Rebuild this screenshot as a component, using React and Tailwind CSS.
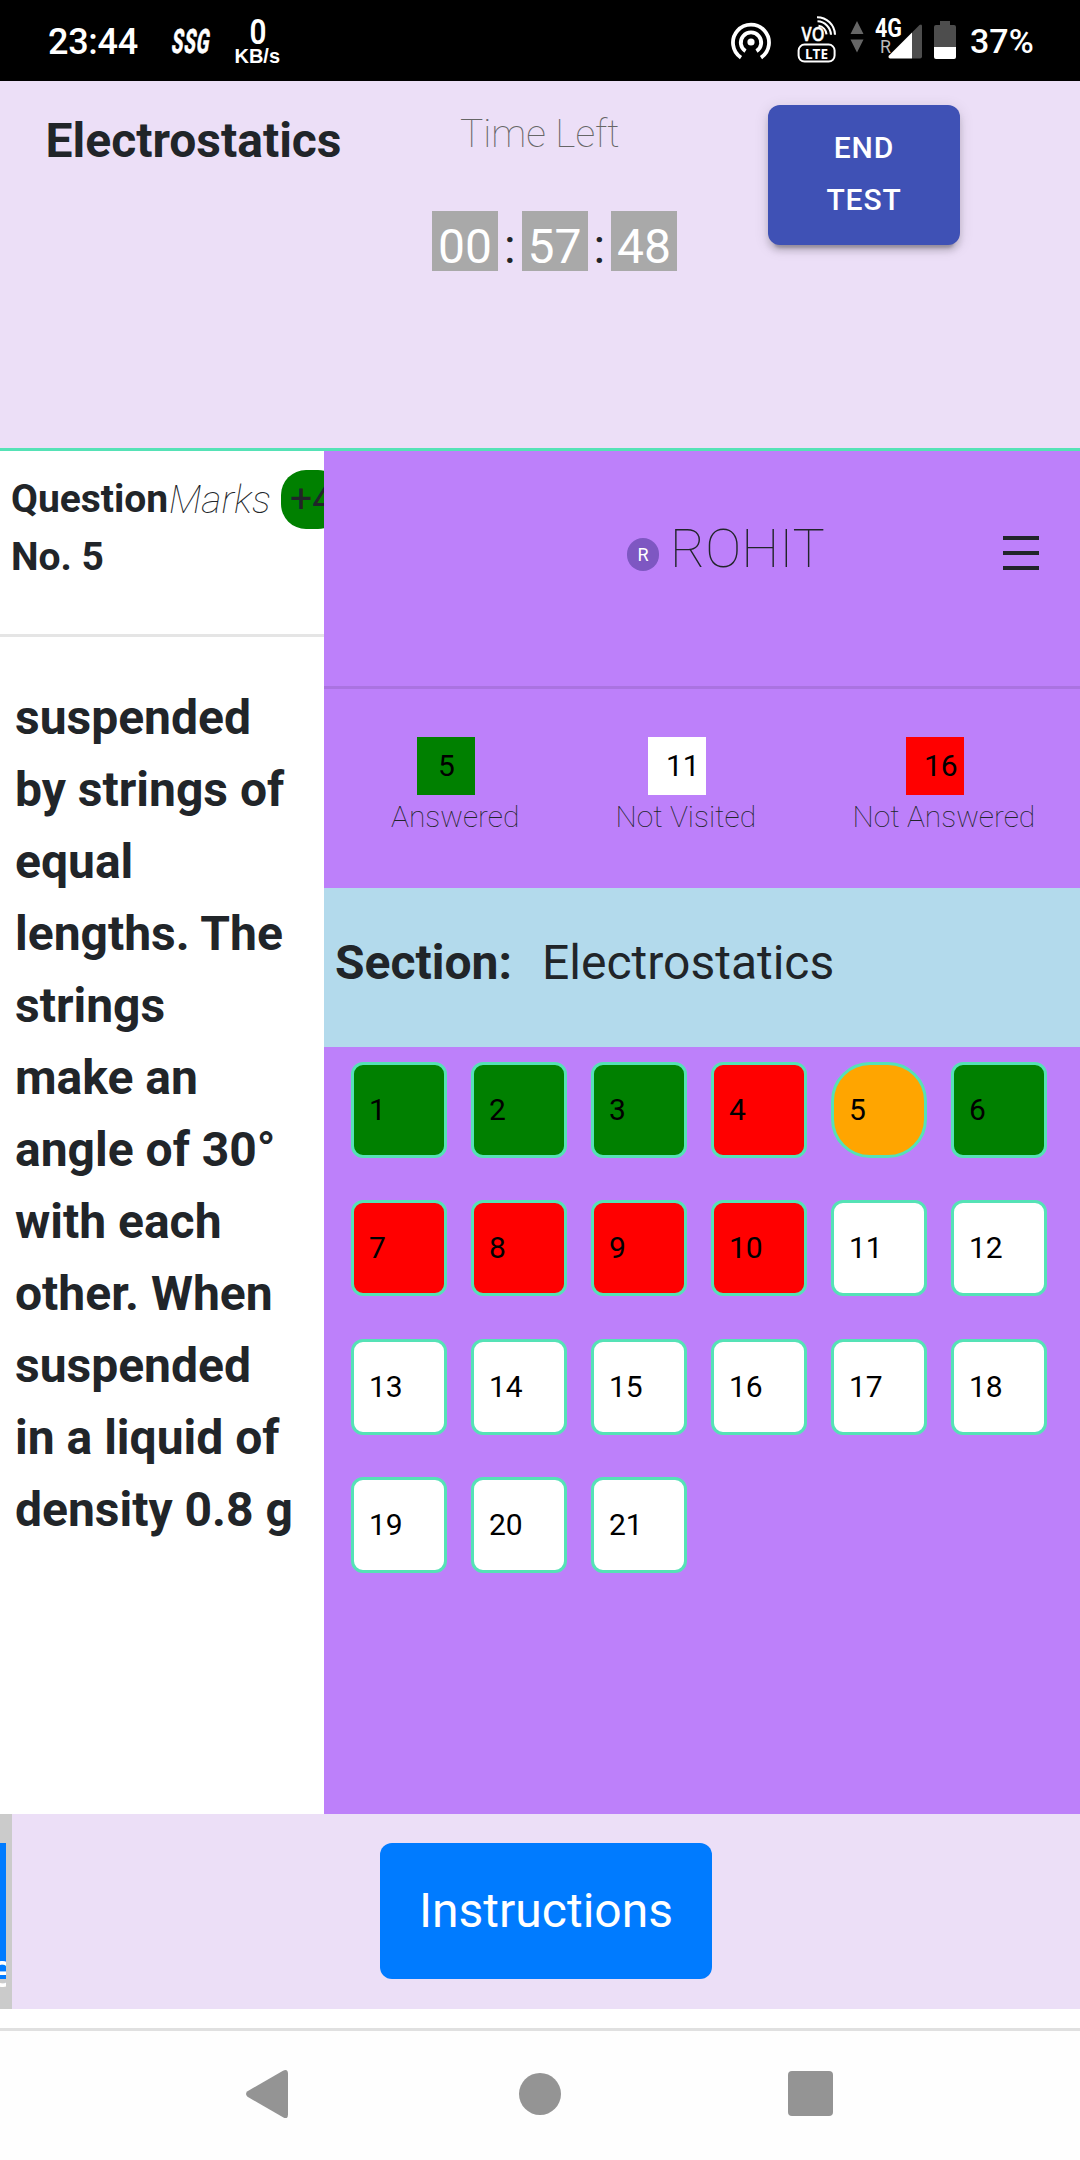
import React from "react";

const HotspotIcon = () => (
  <svg width="42" height="42" viewBox="0 0 42 42" fill="none" stroke="#fff" strokeWidth="3.8" className="shrink-0">
    <path d="M11 36.600A18 18 0 1 1 31 36.600" />
    <path d="M15.500 30.200A10.200 10.200 0 1 1 26.500 30.200" />
    <circle cx="21" cy="21" r="3.600" fill="#fff" stroke="none" />
  </svg>
);

const VolteIcon = () => (
  <svg width="40" height="50" viewBox="0 0 40 50" fill="none" stroke="#fff" className="shrink-0">
    <text x="4.500" y="28" textLength="23" lengthAdjust="spacingAndGlyphs" fill="#fff" stroke="#fff" strokeWidth="0.4" fontFamily="Open Sans" fontWeight="600" fontSize="19">VO</text>
    <path d="M21.500 12.800a9.500 9.500 0 0 1 8 8.500M20.500 8.300a14 14 0 0 1 13.500 13.500M20 4.200a18 18 0 0 1 18 17.500" strokeWidth="2.1" />
    <rect x="1.600" y="31.600" width="36" height="17" rx="6" strokeWidth="2" />
    <text x="8" y="45.500" textLength="23" lengthAdjust="spacingAndGlyphs" fill="#fff" stroke="none" fontFamily="Open Sans" fontWeight="700" fontSize="15">LTE</text>
  </svg>
);

const DataArrows = () => (
  <svg width="14" height="32" viewBox="0 0 14 32" fill="#666" className="shrink-0">
    <path d="M7 0 13.500 13H.500ZM7 31.500 13.500 18.500H.500Z" />
  </svg>
);

const SignalIcon = () => (
  <svg width="48" height="42" viewBox="0 0 48 42" className="shrink-0">
    <path d="M37 14.500 44.500 7Q47 5.500 47 8v30.500q0 2-2 2h-8Z" fill="#4d4d4d" />
    <path d="M37 14.500V40.500H15Q12.500 39.500 14 37.500Z" fill="#fff" />
    <text x="0" y="19" textLength="27" lengthAdjust="spacingAndGlyphs" fill="#fff" fontFamily="Roboto" fontWeight="700" fontSize="25">4G</text>
    <text x="5" y="35" textLength="11" lengthAdjust="spacingAndGlyphs" fill="#bbb" fontFamily="Roboto" fontSize="19">R</text>
  </svg>
);

const BatteryIcon = () => (
  <svg width="22" height="38" viewBox="0 0 22 38" className="shrink-0">
    <path d="M6 0h10v4h4q2 0 2 2v20H0V6q0-2 2-2h4Z" fill="#4d4d4d" />
    <path d="M0 26h22v10q0 2-2 2H2q-2 0-2-2Z" fill="#fff" />
  </svg>
);

function StatusBar() {
  return (
    <div className="flex h-[81px] items-start bg-black text-white">
      <span className="ml-12 mt-[22px] w-[123px] text-[36px] font-medium leading-[41px] tracking-[-0.3px]">23:44</span>
      <svg width="45" height="32" viewBox="0 0 45 32" className="mt-[25px] shrink-0">
        <text transform="translate(-0.500 28) skewX(-9) scale(0.56 1)" letterSpacing="1.400" fill="#fff" stroke="#fff" strokeWidth="0.500" fontFamily="Roboto" fontWeight="800" fontSize="33.500">SSG</text>
      </svg>
      <svg width="48" height="50" viewBox="0 0 48 50" fill="#fff" className="ml-[18px] mt-[17px] shrink-0">
        <text x="15.500" y="27" textLength="17" lengthAdjust="spacingAndGlyphs" fontFamily="Roboto" fontWeight="600" fontSize="35">0</text>
        <text x="0.500" y="45.500" textLength="45.500" lengthAdjust="spacingAndGlyphs" fontFamily="Liberation Sans" fontWeight="700" fontSize="19.500">KB/s</text>
      </svg>
      <div className="ml-auto flex pr-[47px]">
        <div className="mr-[25px] mt-[21px]"><HotspotIcon /></div>
        <div className="mr-[13px] mt-[13px]"><VolteIcon /></div>
        <div className="mr-[11px] mt-[21px]"><DataArrows /></div>
        <div className="mr-[11px] mt-[18px]"><SignalIcon /></div>
        <div className="mr-[14px] mt-[21px]"><BatteryIcon /></div>
        <span className="mt-[21px] w-[63px] text-[34px] font-medium leading-[41px]">37%</span>
      </div>
    </div>
  );
}

function Timer() {
  const box = "h-[60px] w-[66px] bg-[#a9a9a9] pt-[11px] text-center leading-[49px] text-white";
  const colon = "w-[23.5px] pt-[11px] text-center leading-[49px]";
  return (
    <div className="mt-12 flex text-[48px]">
      <span className={box}>00</span>
      <span className={colon}>:</span>
      <span className={box}>57</span>
      <span className={colon}>:</span>
      <span className={box}>48</span>
    </div>
  );
}

function Header() {
  return (
    <header className="flex h-[370px] items-start border-b-[3px] border-[#55e2b6] bg-[#ecdff7] pt-6">
      <h1 className="w-[387px] pl-[45.5px] text-[48px] font-bold leading-[72px]">Electrostatics</h1>
      <div className="w-[381px] pl-[45px]">
        <p className="pl-7 text-[39px] font-thin leading-[58px] text-[#666]">Time Left</p>
        <Timer />
      </div>
      <button className="h-[140px] w-[192px] rounded-[12px] bg-[#3f51b5] px-12 pb-0.5 text-[30px] font-medium leading-[52px] tracking-[0.857px] text-white shadow-[0_9px_3px_-6px_rgba(0,0,0,0.2),0_6px_6px_0_rgba(0,0,0,0.14),0_3px_15px_0_rgba(0,0,0,0.12)]">
        END TEST
      </button>
    </header>
  );
}

const LINES = [
  "suspended", "by strings of", "equal", "lengths. The", "strings", "make an",
  "angle of 30°", "with each", "other. When", "suspended", "in a liquid of", "density 0.8 g",
];

function QuestionPanel() {
  return (
    <section className="w-[324px] shrink-0 overflow-hidden bg-white">
      <div className="flex h-[186px] items-start border-b-[3px] border-[#e5e5e5] pl-[11px] pt-[19px] text-[39px] leading-[58px]">
        <h2 className="w-[158px] shrink-0 font-bold">Question No. 5</h2>
        <i className="mt-px w-[112px] shrink-0 font-thin">Marks</i>
        <span className="shrink-0 rounded-[25px] bg-[#008000] px-[9px] leading-[59px]">+4</span>
      </div>
      <div className="pl-[15px] pt-[45px] text-[48px] font-bold leading-[72px]">
        {LINES.map((line, i) => (
          <div key={i} className="whitespace-nowrap">{line}</div>
        ))}
      </div>
    </section>
  );
}

const STATS = [
  { value: "5", label: "Answered", box: "bg-[#008000] pl-[21px] ml-[93px]", text: "ml-[67px]", width: "w-[267px]" },
  { value: "11", label: "Not Visited", box: "bg-white pl-[18px] ml-[57px]", text: "ml-[24.5px]", width: "w-[238px]" },
  { value: "16", label: "Not Answered", box: "bg-[#ff0000] pl-[18px] ml-[77px]", text: "ml-[23.5px]", width: "w-[251px]" },
];

const QUESTIONS = "gggrogrrrrwwwwwwwwwww".split("");
const CELL = {
  g: "bg-[#008000] rounded-[12px]",
  r: "bg-[#ff0000] rounded-[12px]",
  o: "bg-[#ffa500] rounded-[39px]",
  w: "bg-white rounded-[12px]",
};

function Sidebar() {
  return (
    <aside className="flex-1 bg-[#bd80fa]">
      <div className="flex h-[238px] items-start border-b-[3px] border-[#aa73e1]">
        <span className="ml-[303px] mt-[87px] flex h-[33px] w-8 items-center justify-center rounded-full bg-[#7e57c2] text-[18px] text-white">R</span>
        <span className="ml-[11px] mt-[57px] text-[54px] font-thin leading-[81px]">ROHIT</span>
        <span className="ml-auto mr-[41px] mt-[85px] flex flex-col gap-[11px]">
          <span className="h-1 w-9 bg-[#212529]" />
          <span className="h-1 w-9 bg-[#212529]" />
          <span className="h-1 w-9 bg-[#212529]" />
        </span>
      </div>
      <div className="flex h-[199px] pt-12">
        {STATS.map((s) => (
          <div key={s.label} className={s.width}>
            <div className={"h-[58px] w-[58px] text-[30px] leading-[58px] text-black " + s.box}>{s.value}</div>
            <div className={"whitespace-nowrap text-[30px] font-thin leading-[43px] " + s.text}>{s.label}</div>
          </div>
        ))}
      </div>
      <div className="flex h-[159px] bg-[#b3daec] pl-[11px] pt-[39px] text-[48px] leading-[72px]">
        <b className="w-[207px] font-bold">Section:</b>
        <span>Electrostatics</span>
      </div>
      <div className="grid w-[723px] grid-cols-[repeat(6,96px)] gap-x-6 gap-y-[42.4px] pl-[27px] pt-[15px]">
        {QUESTIONS.map((state, i) => (
          <button key={i} className={"h-24 w-24 border-[3px] border-[#55e2b6] pb-px pl-[15px] text-left text-[30px] leading-[89px] text-black " + CELL[state]}>
            {i + 1}
          </button>
        ))}
      </div>
    </aside>
  );
}

function Footer() {
  return (
    <footer className="flex h-[195px] items-start bg-[#ecdff7]">
      <div className="h-full w-3 bg-[#cbcbcb] pt-[29px]">
        <div className="flex h-[136px] w-1.5 justify-end overflow-x-clip bg-[#007bff] pt-[92px] text-[48px] leading-[72px] text-white">
          <span className="-mr-2">e</span>
        </div>
      </div>
      <button className="ml-[368px] mt-[29px] h-[136px] w-[332px] rounded-[12px] bg-[#007bff] text-[48px] text-white">Instructions</button>
    </footer>
  );
}

function NavBar() {
  return (
    <nav className="mt-[19px] flex h-[132px] items-start border-t-[3px] border-[#e0e0e0] bg-[#fefefe]">
      <svg width="42" height="48" viewBox="0 0 42 48" fill="#949494" className="ml-[246px] mt-[39px]">
        <path d="M1.500 21.300 37 .700Q42-1.500 42 4V44.500Q42 50 37 47.300L1.500 26.700Q-1.500 24 1.500 21.300Z" />
      </svg>
      <div className="ml-[231px] mt-[42px] h-[42px] w-[42px] rounded-full bg-[#949494]" />
      <div className="ml-[226.5px] mt-10 h-[45px] w-[45px] rounded-[4px] bg-[#949494]" />
    </nav>
  );
}

export default function App() {
  return (
    <div className="h-[2160px] w-[1080px] overflow-hidden bg-white font-['Roboto',sans-serif] text-[#212529]">
      <StatusBar />
      <Header />
      <main className="flex h-[1363px]">
        <QuestionPanel />
        <Sidebar />
      </main>
      <Footer />
      <NavBar />
    </div>
  );
}
